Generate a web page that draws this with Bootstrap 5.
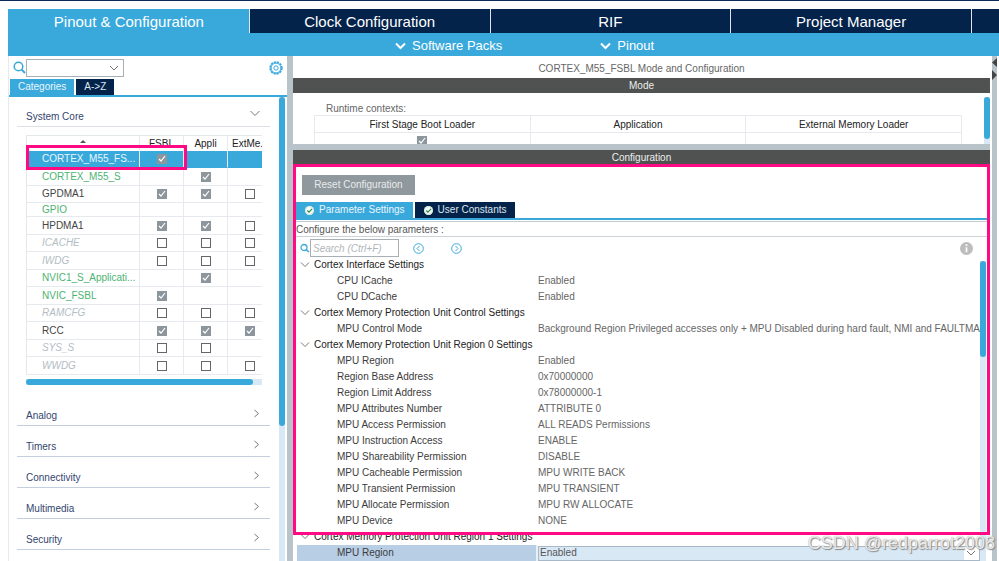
<!DOCTYPE html>
<html lang="en">
<head>
<meta charset="utf-8">
<meta name="viewport" content="width=device-width, initial-scale=1">
<title>Pinout &amp; Configuration</title>
<link href="https://cdn.jsdelivr.net/npm/bootstrap@5.3.0/dist/css/bootstrap.min.css" rel="stylesheet">
<style>
:root{--sky:#39a9dc;--navy:#03234b;--split:#b9c4ca;--track:#d9e8f5;--pink:#ff0a82}
body{font:10px/14px "Liberation Sans",Arial,sans-serif;color:#444;background:#fff}
a{text-decoration:none}
button{font:inherit;border:0;background:none;padding:0;color:inherit}
svg{display:block;flex:none}
.shrink{min-width:0;min-height:0}
.app{border-top:1px solid #0d2a57}
.main-tabs{margin-top:8px;padding-left:8px}
.main-tabs a{flex:1 1 0;height:24px;font-size:15px;line-height:25px;text-align:center;color:#fff;background:var(--navy);border-left:1px solid #dfe6ee}
.main-tabs a.on{background:var(--sky);border-color:var(--sky)}
.main-tabs a.more{flex:0 0 28px}
.sub-bar{margin-left:8px;height:23px;padding:3px 0 0 387px;gap:98px;background:var(--sky);color:#fff;font-size:13px}
.sub-bar button{gap:6px}
.side{flex:0 0 279px;border-left:1px solid #e6eaee}
.find-row{height:23px;padding:0 4px}
.pick{width:98px;height:18px;border:1px solid #a9b0b5;border-radius:0;appearance:none;background:#fff url("data:image/svg+xml,%3Csvg xmlns='http://www.w3.org/2000/svg' width='10' height='6'%3E%3Cpath d='M1 1l4 4 4-4' fill='none' stroke='%23777'/%3E%3C/svg%3E") no-repeat right 4px center}
.tab-row{gap:2px;padding-left:1px;border-bottom:2px solid var(--sky)}
.tab-row button{height:16px;line-height:16px;padding:0 8px;background:var(--navy);color:#dce6ef}
.tab-row button.on{background:var(--sky);color:#e9f6fd}
.cats{padding:0 9px 0 8px;gap:6px}
.sect{height:25px;padding:8px 10px 0 9px;color:#34456f;border-bottom:1px solid #c3cfdf;width:100%}
.sect-open{height:30px;padding-top:13px;border-color:#dde1e5}
.clip{margin:8px 8px 0 9px}
.ip{width:245px;table-layout:fixed;border-collapse:separate;border-spacing:0;border-left:1px solid #e3e8eb;border-top:1px solid #e3e8eb}
.ip th,.ip td{padding:0;height:17px;line-height:14px;border-right:1px solid #e6eaee;border-bottom:1px solid #e6eaee;text-align:center;font-weight:400;vertical-align:middle}
.ip thead th{height:15px;border-bottom:0;color:#222}
.ip tbody th{text-align:left;padding-left:15px;white-space:nowrap}
.ip .tall>*{height:18px}
.ip .low>*{height:14px;line-height:12px}
.ip .sel>*{background:var(--sky);color:#e9f6fd;border-bottom-color:var(--sky)}
.ip .ok th{color:#4db371}
.ip .off th{color:#b3bdc3;font-style:italic}
.tick{appearance:none;display:block;margin:0 auto;width:10px;height:10px;border:1px solid #666;background:#fff}
.tick:checked{border-color:#8c969c;background:#8c969c url("data:image/svg+xml,%3Csvg xmlns='http://www.w3.org/2000/svg' width='8' height='8'%3E%3Cpath d='M1 4l2 2 4-5' fill='none' stroke='%23fff' stroke-width='1.2'/%3E%3C/svg%3E") center no-repeat}
.h-bar{height:6px;margin:4px 0 10px;background:var(--track)}
.h-bar div{height:6px;width:96%;border-radius:3px;background:var(--sky)}
.v-bar{flex:0 0 6px;background:var(--track)}
.v-bar div{border-radius:3px;background:var(--sky)}
.side .v-bar{margin-right:2px}
.splitter{flex:0 0 6px;background:var(--split)}
.head{height:22px;line-height:25px;text-align:center;color:#666}
.dark{height:15px;line-height:15px;background:#4f5250;color:#eee;text-align:center}
.mode-box{height:51px}
.mode-box .cap{padding:9px 0 0 12px;height:22px;color:#666}
.ctx{table-layout:fixed;width:100%;border-collapse:collapse;color:#222}
.ctx th,.ctx td{border:1px solid #e6eaee;font-weight:400;text-align:center;padding:0;height:17px}
.ctx th{padding-top:2px}
.reset{width:113px;height:20px;margin:10px 0 7px 9px;background:#8f989d;color:#e8ebec}
.cfg-tabs{margin-left:3px;padding:0}
.cfg-tabs button{gap:5px;padding:0 8px 0 9px}
.note{margin-left:3px;height:16px;margin-top:1px;line-height:16px;border-top:1px solid #c4cbd0;border-bottom:1px solid #cdd3d7;color:#555}
.seek{height:18px;margin-top:2px;padding:0 17px 0 7px}
.seek input{width:89px;height:18px;border:1px solid #a9b0b5;padding:0 2px;font-style:italic}
.seek input::placeholder{color:#b0b5b9}
.params{table-layout:fixed;width:100%;border-collapse:collapse}
.params th,.params td{height:16px;line-height:16px;padding:0;font-weight:400;white-space:nowrap}
.params .grp th{color:#222}
.params .leaf th{padding-left:40px;color:#3c3c3c}
.params td{padding-left:1px;color:#666}
.params .now th{background:#b8cee5;border-right:2px solid #e8eff6}
.params .now td{padding:0}
.params select{display:block;width:100%;height:15px;border:1px solid #a9b8c6;border-radius:0;padding:0 1px;appearance:none;color:#555;line-height:12px;background:url("data:image/svg+xml,%3Csvg xmlns='http://www.w3.org/2000/svg' width='15' height='15'%3E%3Cpath fill='%23fff' d='M0 0h15v15H0z'/%3E%3Cpath d='M3 5l4 4 4-4' fill='none' stroke='%23777'/%3E%3C/svg%3E") no-repeat right center var(--track)}
.edge{flex:0 0 5px;background:var(--split);margin:0 2px}
.frame-ip{left:17px;right:92px;top:48px;height:25px;border:3px solid var(--pink)}
.frame-cfg{left:0;right:0;top:14px;height:371px;border:3px solid var(--pink)}
.sign{right:4px;bottom:6px;font-size:18px;line-height:24px;color:#ffffffcc;text-shadow:1px 1px 1px #888,0 0 1px #999}
</style>
<script src="https://cdn.jsdelivr.net/npm/bootstrap@5.3.0/dist/js/bootstrap.bundle.min.js"></script>
</head>
<body>
<div class="app vh-100 d-flex flex-column overflow-hidden position-relative">
  <nav class="main-tabs d-flex">
    <a class="on" href="#">Pinout &amp; Configuration</a>
    <a href="#">Clock Configuration</a>
    <a href="#">RIF</a>
    <a href="#">Project Manager</a>
    <a class="more" href="#" aria-label="Tools"></a>
  </nav>
  <div class="sub-bar d-flex align-items-center">
    <button class="d-flex align-items-center"><svg width="11" height="8" viewBox="0 0 11 8"><path d="M1 1.500l4.500 4.500L10 1.500" fill="none" stroke="#fff" stroke-width="2"/></svg>Software Packs</button>
    <button class="d-flex align-items-center"><svg width="11" height="8" viewBox="0 0 11 8"><path d="M1 1.500l4.500 4.500L10 1.500" fill="none" stroke="#fff" stroke-width="2"/></svg>Pinout</button>
  </div>

  <div class="d-flex flex-grow-1 ps-2 shrink">
    <aside class="side shrink d-flex flex-column">
      <div class="find-row d-flex align-items-center">
        <svg width="13" height="13" viewBox="0 0 13 13" fill="none" stroke="#39a9dc"><circle cx="5.500" cy="5.500" r="4.300" stroke-width="1.500"/><path d="M8.600 8.600L12 12" stroke-width="2"/></svg>
        <select class="pick" aria-label="Find peripheral"><option></option></select>
        <button class="ms-auto" aria-label="Settings"><svg width="14" height="14" viewBox="0 0 14 14" fill="none" stroke="#39a9dc"><circle cx="7" cy="7" r="5.900" stroke-width="1.600" stroke-dasharray="2.300 .79"/><circle cx="7" cy="7" r="4.900"/><circle cx="7" cy="7" r="2.200"/></svg></button>
      </div>
      <div class="tab-row d-flex"><button class="on">Categories</button><button>A-&gt;Z</button></div>
      <div class="d-flex flex-grow-1 shrink">
        <div class="cats flex-grow-1 shrink d-flex flex-column position-relative overflow-hidden">
          <div>
            <button class="sect sect-open d-flex justify-content-between">System Core <svg width="10" height="10" viewBox="0 0 10 10"><path d="M.5 1L5 5.500l4.500-4.500" fill="none" stroke="#777"/></svg></button>
            <div class="clip overflow-hidden">
              <table class="ip">
                <colgroup><col style="width:113px"><col style="width:44px"><col style="width:44px"><col style="width:44px"></colgroup>
                <thead><tr><th scope="col"><svg class="mx-auto" width="6" height="8" viewBox="0 0 6 8"><path d="M0 3l3-3 3 3z" fill="#555"/><path d="M0 5h6L3 8z" fill="#ccc"/></svg></th><th scope="col">FSBL</th><th scope="col">Appli</th><th scope="col" class="text-start ps-1">ExtMe.</th></tr></thead>
                <tbody id="ip"></tbody>
              </table>
              <div class="h-bar"><div></div></div>
            </div>
          </div>
          <button class="sect d-flex justify-content-between">Analog <svg width="7" height="10" viewBox="0 0 7 10"><path d="M1.500 1L5.500 4.500 1.500 8" fill="none" stroke="#777"/></svg></button>
          <button class="sect d-flex justify-content-between">Timers <svg width="7" height="10" viewBox="0 0 7 10"><path d="M1.500 1L5.500 4.500 1.500 8" fill="none" stroke="#777"/></svg></button>
          <button class="sect d-flex justify-content-between">Connectivity <svg width="7" height="10" viewBox="0 0 7 10"><path d="M1.500 1L5.500 4.500 1.500 8" fill="none" stroke="#777"/></svg></button>
          <button class="sect d-flex justify-content-between">Multimedia <svg width="7" height="10" viewBox="0 0 7 10"><path d="M1.500 1L5.500 4.500 1.500 8" fill="none" stroke="#777"/></svg></button>
          <button class="sect d-flex justify-content-between">Security <svg width="7" height="10" viewBox="0 0 7 10"><path d="M1.500 1L5.500 4.500 1.500 8" fill="none" stroke="#777"/></svg></button>
          <div class="frame-ip position-absolute pe-none"></div>
        </div>
        <div class="v-bar"><div style="height:71%"></div></div>
      </div>
    </aside>
    <div class="splitter"></div>

    <main class="flex-grow-1 shrink d-flex flex-column">
      <div class="head">CORTEX_M55_FSBL Mode and Configuration</div>
      <div class="dark">Mode</div>
      <div class="mode-box d-flex overflow-hidden">
        <div class="flex-grow-1" style="padding:0 22px 0 21px">
          <div class="cap">Runtime contexts:</div>
          <table class="ctx">
            <thead><tr><th scope="col">First Stage Boot Loader</th><th scope="col">Application</th><th scope="col">External Memory Loader</th></tr></thead>
            <tbody><tr><td><input class="tick" type="checkbox" checked aria-label="First Stage Boot Loader"></td><td></td><td></td></tr></tbody>
          </table>
        </div>
        <div class="v-bar mt-1"><div style="height:90%"></div></div>
      </div>
      <div class="splitter"></div>
      <section class="flex-grow-1 shrink position-relative d-flex flex-column">
        <div class="dark">Configuration</div>
        <div><button class="reset">Reset Configuration</button></div>
        <div class="tab-row cfg-tabs d-flex">
          <button class="on d-flex align-items-center"><svg width="9" height="9" viewBox="0 0 9 9"><circle cx="4.500" cy="4.500" r="4.500" fill="#fff"/><circle cx="4.500" cy="4.500" r="3.900" fill="#fff" stroke="#a9d8b5" stroke-width=".6"/><path d="M2.300 4.500l1.700 1.700 3-3.400" fill="none" stroke="#27884a" stroke-width="1.200"/></svg>Parameter Settings</button>
          <button class="d-flex align-items-center"><svg width="9" height="9" viewBox="0 0 9 9"><circle cx="4.500" cy="4.500" r="4.500" fill="#fff"/><circle cx="4.500" cy="4.500" r="3.900" fill="#fff" stroke="#a9d8b5" stroke-width=".6"/><path d="M2.300 4.500l1.700 1.700 3-3.400" fill="none" stroke="#27884a" stroke-width="1.200"/></svg>User Constants</button>
        </div>
        <div class="note">Configure the below parameters :</div>
        <div class="seek d-flex align-items-center">
          <svg width="10" height="10" viewBox="0 0 10 10" fill="none" stroke="#39a9dc"><circle cx="4" cy="4.500" r="3" stroke-width="1.300"/><path d="M6.300 6.800L9 9" stroke-width="1.600"/></svg>
          <input type="search" placeholder="Search (Ctrl+F)" aria-label="Search parameters">
          <button style="margin:0 27px 0 14px" aria-label="Previous"><svg width="11" height="11" viewBox="0 0 11 11" fill="none" stroke="#39a9dc"><circle cx="5.500" cy="5.500" r="4.800"/><path d="M6.500 3L4 5.500 6.500 8"/></svg></button>
          <button aria-label="Next"><svg width="11" height="11" viewBox="0 0 11 11" fill="none" stroke="#39a9dc"><circle cx="5.500" cy="5.500" r="4.800"/><path d="M4.500 3L7 5.500 4.500 8"/></svg></button>
          <button class="ms-auto" aria-label="Information"><svg width="13" height="13" viewBox="0 0 13 13"><circle cx="6.500" cy="6.500" r="6.500" fill="#bdbdbd"/><path d="M6.500 2.300v1.700M6.500 5.200v5" stroke="#fff" stroke-width="1.700"/></svg></button>
        </div>
        <div class="d-flex flex-grow-1 overflow-hidden" style="padding:0 4px">
          <div class="flex-grow-1">
            <table class="params"><colgroup><col style="width:240px"><col></colgroup><tbody id="params"></tbody></table>
          </div>
          <div class="v-bar mt-1"><div style="height:32%"></div></div>
        </div>
        <div class="frame-cfg position-absolute pe-none"></div>
      </section>
    </main>
    <div class="edge"><svg width="5" height="26" viewBox="0 0 5 26" fill="#444"><path d="M5 2v9L0 6.500zM0 14v10l5-5z"/></svg></div>
  </div>
  <div class="sign position-absolute pe-none">CSDN @redparrot2008</div>
</div>
<script>
// name, row classes, one flag per context: 1 ticked, 0 empty, - no box
const peripherals = [
  ["CORTEX_M55_FS...", "sel", "1--"], ["CORTEX_M55_S", "ok tall", "-1-"], ["GPDMA1", "", "110"],
  ["GPIO", "ok low", "---"], ["HPDMA1", "tall", "110"], ["ICACHE", "off", "000"], ["IWDG", "off tall", "000"],
  ["NVIC1_S_Applicati...", "ok", "-1-"], ["NVIC_FSBL", "ok tall", "1--"], ["RAMCFG", "off", "000"],
  ["RCC", "tall", "111"], ["SYS_S", "off", "00-"], ["WWDG", "off tall", "000"]
];
const contexts = ["FSBL", "Appli", "ExtMemLoader"];
document.getElementById("ip").innerHTML = peripherals.map(([name, cls, flags]) =>
  `<tr class="${cls}"><th scope="row">${name}</th>` + [...flags].map((f, i) =>
    `<td>${f === "-" ? "" : `<input class="tick" type="checkbox" aria-label="${name} ${contexts[i]}"${f === "1" ? " checked" : ""}>`}</td>`).join("") + "</tr>").join("");

// a row without a value is a group heading
const params = [
  ["Cortex Interface Settings"], ["CPU ICache", "Enabled"], ["CPU DCache", "Enabled"],
  ["Cortex Memory Protection Unit Control Settings"],
  ["MPU Control Mode", "Background Region Privileged accesses only + MPU Disabled during hard fault, NMI and FAULTMA."],
  ["Cortex Memory Protection Unit Region 0 Settings"],
  ["MPU Region", "Enabled"], ["Region Base Address", "0x70000000"], ["Region Limit Address", "0x78000000-1"],
  ["MPU Attributes Number", "ATTRIBUTE 0"], ["MPU Access Permission", "ALL READS Permissions"],
  ["MPU Instruction Access", "ENABLE"], ["MPU Shareability Permission", "DISABLE"],
  ["MPU Cacheable Permission", "MPU WRITE BACK"], ["MPU Transient Permission", "MPU TRANSIENT"],
  ["MPU Allocate Permission", "MPU RW ALLOCATE"], ["MPU Device", "NONE"],
  ["Cortex Memory Protection Unit Region 1 Settings"]
];
const arrow = '<svg width="10" height="8" viewBox="0 0 10 8"><path d="M1 1.500l4 4 4-4" fill="none" stroke="#777"/></svg>';
document.getElementById("params").innerHTML = params.map(([k, v]) => v
  ? `<tr class="leaf"><th scope="row">${k}</th><td>${v}</td></tr>`
  : `<tr class="grp"><th scope="rowgroup" colspan="2"><span class="d-flex align-items-center gap-1" style="padding-left:3px">${arrow}${k}</span></th></tr>`).join("") +
  '<tr class="leaf now"><th scope="row"><label for="region1">MPU Region</label></th><td><select id="region1"><option>Enabled</option><option>Disabled</option></select></td></tr>';
</script>
</body>
</html>
